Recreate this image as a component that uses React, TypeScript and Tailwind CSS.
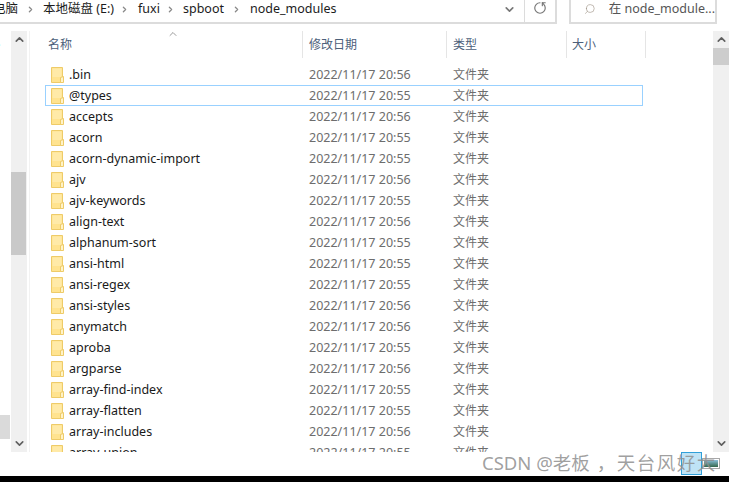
import { ChevronDown, ChevronRight, ChevronUp, RotateCw, Search } from 'lucide-react';

const font = "font-['Noto_Sans','Noto_Sans_CJK_SC',sans-serif]";

const rows = [
  { name: '.bin', time: '20:56' },
  { name: '@types', time: '20:55', focused: true },
  { name: 'accepts', time: '20:56' },
  { name: 'acorn', time: '20:55' },
  { name: 'acorn-dynamic-import', time: '20:55' },
  { name: 'ajv', time: '20:56' },
  { name: 'ajv-keywords', time: '20:55' },
  { name: 'align-text', time: '20:56' },
  { name: 'alphanum-sort', time: '20:55' },
  { name: 'ansi-html', time: '20:55' },
  { name: 'ansi-regex', time: '20:55' },
  { name: 'ansi-styles', time: '20:56' },
  { name: 'anymatch', time: '20:56' },
  { name: 'aproba', time: '20:55' },
  { name: 'argparse', time: '20:56' },
  { name: 'array-find-index', time: '20:55' },
  { name: 'array-flatten', time: '20:55' },
  { name: 'array-includes', time: '20:56' },
  { name: 'array-union', time: '20:55' },
];

function FolderIcon() {
  return (
    <svg width="13" height="16" viewBox="0 0 13 16" className="shrink-0">
      <path d="M0.5 0.5H11.5V15.5H0.5Z" fill="#ffe38f" stroke="#eecb68" />
      <path d="M1.5 1.5H10.5V10H1.5Z" fill="#ffeaa8" />
      <path d="M9.5 15.5V10.5L12.5 9.5V15.5Z" fill="#fff3c8" stroke="#eecb68" />
    </svg>
  );
}

function Scrollbar({ thumbClass, spacerClass }: { thumbClass: string; spacerClass: string }) {
  return (
    <div className="flex h-full flex-col bg-[#f0f0f0]">
      <div className="flex h-[17px] items-center justify-center">
        <ChevronUp size={13} strokeWidth={3} color="#606060" />
      </div>
      <div className={spacerClass} />
      <div className={thumbClass} />
      <div className="flex-1" />
      <div className="flex h-[17px] items-center justify-center">
        <ChevronDown size={13} strokeWidth={3} color="#606060" />
      </div>
    </div>
  );
}

function Crumb({ label, className }: { label: string; className: string }) {
  return <span className={`whitespace-nowrap ${className}`}>{label}</span>;
}

function Sep({ className }: { className: string }) {
  return <ChevronRight size={9} strokeWidth={3.5} color="#8a8a8a" className={`shrink-0 ${className}`} />;
}

export default function App() {
  return (
    <div className={`relative flex h-[482px] w-[729px] flex-col overflow-hidden bg-white ${font}`}>
      {/* address bar */}
      <div className="flex h-[24px] shrink-0 text-[12.5px] leading-[18px] text-[#1c1c1c]">
        <div className="flex w-[557px] items-center overflow-hidden border-b-2 border-r-2 border-[#dcdcdc] pb-[4px]">
          <div className="-ml-[7px] w-[25px] shrink-0 overflow-hidden">
            <Crumb label="电脑" className="block" />
          </div>
          <Sep className="ml-[8px]" />
          <Crumb label="本地磁盘 (E:)" className="ml-[8px] w-[69px]" />
          <Sep className="ml-[8px]" />
          <Crumb label="fuxi" className="ml-[9px] w-[20px]" />
          <Sep className="ml-[8px]" />
          <Crumb label="spboot" className="ml-[8px] w-[42px]" />
          <Sep className="ml-[7px]" />
          <Crumb label="node_modules" className="ml-[9px] w-[86px]" />
          <div className="flex-1" />
          <ChevronDown size={13} strokeWidth={3} color="#777777" className="mr-[8px] mt-[1px]" />
          <div className="-mb-[4px] flex h-[24px] w-[31px] items-start justify-center border-l border-[#dcdcdc] pt-[1px]">
            <RotateCw size={14} strokeWidth={2} color="#777777" className="mt-[1px] -scale-x-100 rotate-90" />
          </div>
        </div>
        <div className="ml-[12px] flex w-[148px] items-center border-x-2 border-b-2 border-[#dcdcdc] pb-[4px] pl-[13px]">
          <Search size={14} strokeWidth={1.3} color="#a09488" className="-scale-x-100" />
          <span className="ml-[13px] whitespace-nowrap text-[#555555]">在 node_module...</span>
        </div>
      </div>

      {/* panes */}
      <div className="flex h-[428px] shrink-0 pt-[7px]">
        <div className="relative w-[11px] shrink-0 overflow-hidden">
          <span className="absolute left-[-7px] top-[4px] text-[13px] text-[#1c1c1c]">e</span>
          <div className="absolute left-0 top-[384px] h-[24px] w-[10px] bg-[#dadada]" />
        </div>
        <div className="w-[16px] shrink-0">
          <Scrollbar thumbClass="h-[83px] w-[15px] bg-[#c9c9c9]" spacerClass="h-[124px]" />
        </div>
        <div className="ml-[2px] w-[1px] shrink-0 bg-[#f2f2f2]" />

        <div className="flex min-w-0 flex-1 flex-col overflow-hidden">
          {/* column headers */}
          <div className="relative flex h-[27px] shrink-0 text-[12px] text-[#4c607a]">
            <ChevronUp size={12} strokeWidth={1.5} color="#7a7a7a" className="absolute left-[137px] top-[-3px]" />
            <div className="flex w-[272px] items-center pl-[18px]">名称</div>
            <div className="flex w-[144px] items-center border-l border-[#e5e5e5] pl-[6px]">修改日期</div>
            <div className="flex w-[120px] items-center border-l border-[#e5e5e5] pl-[6px]">类型</div>
            <div className="flex w-[80px] items-center border-x border-[#e5e5e5] pl-[5px]">大小</div>
          </div>

          {/* file list */}
          <div className="mt-[6px] ml-[15px] flex flex-col text-[12.5px] leading-[19px]">
            {rows.map(row => (
              <div
                key={row.name}
                className={`flex h-[21px] w-[598px] shrink-0 items-center border ${
                  row.focused ? 'border-[#99d1ff]' : 'border-transparent'
                }`}
              >
                <div className="ml-[5px] w-[18px] shrink-0">
                  <FolderIcon />
                </div>
                <span className="w-[240px] shrink-0 whitespace-nowrap text-[#1a1a1a]">{row.name}</span>
                <span className="w-[144px] shrink-0 whitespace-nowrap text-[#6d6d6d]">2022/11/17 {row.time}</span>
                <span className="whitespace-nowrap text-[12px] text-[#6d6d6d]">文件夹</span>
              </div>
            ))}
          </div>
        </div>

        <div className="w-[16px] shrink-0">
          <Scrollbar thumbClass="h-[17px] w-[16px] bg-[#cdcdcd]" spacerClass="h-0" />
        </div>
      </div>

      <div className="flex-1 bg-white" />
      <div className="h-[6px] shrink-0 bg-black" />

      {/* thumbnail left under the CSDN watermark */}
      <div className="absolute left-[681px] top-[452px] h-[23px] w-[21px] border border-[#2f9fd8] bg-[#bfe3f5]" />
      <div className="absolute left-[702px] top-[458px] flex h-[11px] w-[18px] border border-[#a8a8a8] bg-white p-[1px]">
        <div className="h-full w-full bg-gradient-to-b from-[#8cc0dc] to-[#35684e]" />
      </div>
      <span className="absolute left-[482px] top-[450px] whitespace-nowrap text-[18.5px] leading-[26px] text-[#8f8f8f]/85">
        CSDN @老板 <span className="ml-[2px] tracking-[1.5px]">，天台风好大</span>
      </span>
    </div>
  );
}
